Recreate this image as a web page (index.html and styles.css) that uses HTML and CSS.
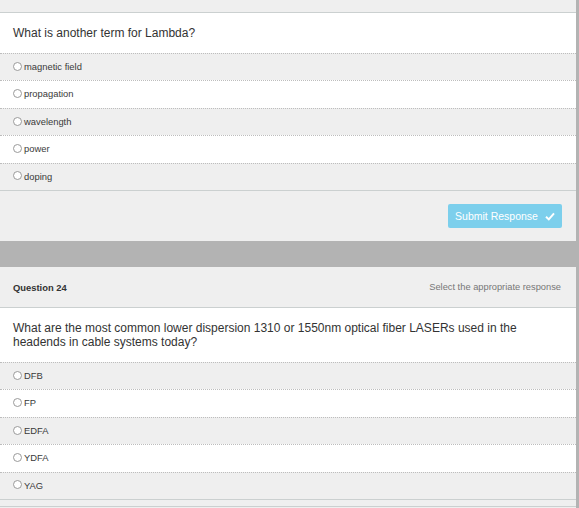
FILE: index.html
```html
<!DOCTYPE html>
<html>
<head>
<meta charset="utf-8">
<link rel="stylesheet" href="styles.css">
</head>
<body>
<div class="page">
  <section class="card">
    <div class="card-head partial"></div>
    <div class="question">What is another term for Lambda?</div>
    <ul class="options">
      <li class="opt"><span class="radio"></span>magnetic field</li>
      <li class="opt"><span class="radio"></span>propagation</li>
      <li class="opt"><span class="radio"></span>wavelength</li>
      <li class="opt"><span class="radio"></span>power</li>
      <li class="opt"><span class="radio"></span>doping</li>
    </ul>
    <div class="card-foot">
      <button class="submit">Submit Response
        <svg class="check" width="10" height="9" viewBox="0 0 10 9"><path d="M1 4.8 L3.8 7.4 L9 1.4" fill="none" stroke="#fff" stroke-width="2"/></svg>
      </button>
    </div>
  </section>

  <section class="card">
    <div class="card-head">
      <span class="q-num">Question 24</span>
      <span class="q-hint">Select the appropriate response</span>
    </div>
    <div class="question q2">What are the most common lower dispersion 1310 or 1550nm optical fiber LASERs used in the headends in cable systems today?</div>
    <ul class="options">
      <li class="opt"><span class="radio"></span>DFB</li>
      <li class="opt"><span class="radio"></span>FP</li>
      <li class="opt"><span class="radio"></span>EDFA</li>
      <li class="opt"><span class="radio"></span>YDFA</li>
      <li class="opt"><span class="radio"></span>YAG</li>
    </ul>
    <div class="card-foot cut"><div class="foot-line"></div></div>
  </section>
</div>
</body>
</html>
```

FILE: styles.css
```css
html, body {
  margin: 0;
  padding: 0;
  background: #b3b3b3;
}
body {
  font-family: "Liberation Sans", Arial, Helvetica, sans-serif;
  color: #333;
  height: 508px;
  overflow: hidden;
}
.page {
  width: 576px;
  display: flex;
  flex-direction: column;
  gap: 26px;
}
.card {
  background: #efefef;
}
.card-head {
  height: 41px;
  box-sizing: border-box;
  padding: 0 15px 0 13px;
  display: flex;
  align-items: center;
  justify-content: space-between;
  border-bottom: 1px solid #cbd0d0;
}
.card-head.partial {
  height: 13px;
}
.q-num {
  font-size: 9.4px;
  font-weight: bold;
  color: #333;
}
.q-hint {
  font-size: 9.3px;
  color: #777;
}
.question {
  background: #fff;
  font-size: 12px;
  line-height: 14px;
  padding: 13px 13px 13px;
  color: #333;
}
.question.q2 {
  padding: 13px 13px 13px;
}
.options {
  list-style: none;
  margin: 0;
  padding: 0;
}
.opt {
  border-top: 1px dotted #bdbdbd;
  padding: 8px 13px;
  font-size: 9.4px;
  line-height: 10.4px;
  color: #3a3a3a;
  background: #efefef;
  display: flex;
  align-items: center;
}
.opt:nth-child(even) {
  background: #fff;
}
.radio {
  width: 7px;
  height: 7px;
  border: 1px solid #9a9a9a;
  border-radius: 50%;
  background: #fff;
  margin-right: 2px;
  margin-top: -2px;
  flex: none;
}
.card-foot {
  border-top: 1px solid #cbd0d0;
  padding: 13px 14px 13px;
  display: flex;
  justify-content: flex-end;
}
.card-foot.cut {
  padding: 6px 0 0;
  height: 20px;
  display: block;
}
.foot-line {
  border-top: 1px solid #cbd0d0;
}
.submit {
  height: 24px;
  width: 114px;
  border: none;
  border-radius: 2px;
  background: #7ccfec;
  color: #fff;
  font-family: "Liberation Sans", Arial, Helvetica, sans-serif;
  font-size: 10.5px;
  display: flex;
  align-items: center;
  justify-content: center;
  gap: 7px;
  padding: 0 0 0 0;
}
.check {
  display: block;
}
```
